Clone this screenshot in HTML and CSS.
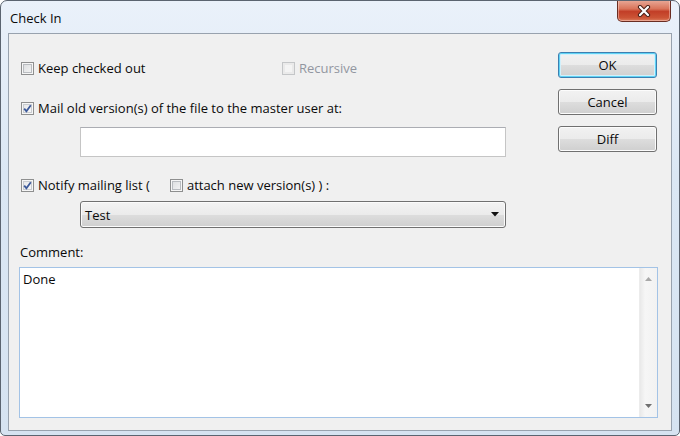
FILE: index.html
```html
<!DOCTYPE html>
<html>
<head>
<meta charset="utf-8">
<link rel="stylesheet" href="styles.css">
</head>
<body>
<div class="window">
  <div class="titlebar">
    <span class="title">Check In</span>
    <div class="close">
      <svg width="14" height="12" viewBox="0 0 14 12">
        <path d="M3 2 L11 10 M11 2 L3 10" stroke="#4a2118" stroke-width="4.2" stroke-linecap="round"/>
        <path d="M3 2 L11 10 M11 2 L3 10" stroke="#ffffff" stroke-width="2.2" stroke-linecap="round"/>
      </svg>
    </div>
  </div>
  <div class="client">
    <div class="top">
      <div class="main">
        <div class="row row-first">
          <label class="check wide"><span class="box"></span><span>Keep checked out</span></label>
          <label class="check disabled"><span class="box"></span><span>Recursive</span></label>
        </div>
        <div class="row row-mail">
          <label class="check"><span class="box checked"><svg width="9" height="9" viewBox="0 0 9 9"><path d="M1.2 4.6 L3.4 7.2 L7.8 1.2" fill="none" stroke="#3d5a9a" stroke-width="1.8"/></svg></span><span>Mail old version(s) of the file to the master user at:</span></label>
        </div>
        <div class="field"></div>
        <div class="row row-notify">
          <label class="check"><span class="box checked"><svg width="9" height="9" viewBox="0 0 9 9"><path d="M1.2 4.6 L3.4 7.2 L7.8 1.2" fill="none" stroke="#3d5a9a" stroke-width="1.8"/></svg></span><span>Notify mailing list (</span></label>
          <label class="check second"><span class="box"></span><span>attach new version(s) ) :</span></label>
        </div>
        <div class="select">
          <span>Test</span>
          <svg width="8" height="5" viewBox="0 0 8 5"><path d="M0 0 H8 L4 4.5 Z" fill="#111"/></svg>
        </div>
      </div>
      <div class="buttons">
        <div class="btn default">OK</div>
        <div class="btn">Cancel</div>
        <div class="btn">Diff</div>
      </div>
    </div>
    <div class="comment-label">Comment:</div>
    <div class="memo">
      <div class="memo-text">Done</div>
      <div class="scrollbar">
        <svg width="7" height="4" viewBox="0 0 7 4"><path d="M0 4 L3.5 0 L7 4 Z" fill="#a8a8a8"/></svg>
        <svg width="7" height="4" viewBox="0 0 7 4"><path d="M0 0 L3.5 4 L7 0 Z" fill="#707070"/></svg>
      </div>
    </div>
  </div>
</div>
</body>
</html>
```

FILE: styles.css
```css
* { box-sizing: border-box; }
html, body { margin: 0; padding: 0; background: #ffffff; }
body {
  font-family: "Open Sans", "Noto Sans", sans-serif;
  font-size: 13px;
  color: #0a0a0a;
}
.window {
  width: 680px;
  height: 436px;
  border: 1px solid #5b6470;
  border-radius: 7px 7px 5px 5px;
  background: linear-gradient(#eaf1fa, #dbe7f4 40%, #d6e3f1);
  display: flex;
  flex-direction: column;
  overflow: hidden;
}
.titlebar {
  height: 32px;
  display: flex;
  align-items: flex-start;
  justify-content: space-between;
  padding-left: 9px;
}
.title {
  margin-top: 7px;
  line-height: 20px;
  color: #0a0a0a;
}
.close {
  width: 54px;
  height: 22px;
  margin-right: 8px;
  margin-top: -1px;
  border: 1px solid #6a2d22;
  border-top: none;
  border-radius: 0 0 5px 5px;
  background: linear-gradient(#e9ab9a 0%, #d9745a 42%, #c23e27 55%, #cc5436 85%, #dc7f60 100%);
  box-shadow: inset 0 0 0 1px rgba(255,220,210,0.45);
  display: flex;
  align-items: center;
  justify-content: center;
}
.client {
  flex: 1;
  margin: 0 7px 4px 7px;
  border: 1px solid #98a2ae;
  background: #f0f0f0;
  padding: 18px 13px 0 10px;
  display: flex;
  flex-direction: column;
}
.top {
  display: flex;
  padding-left: 2px;
}
.main {
  width: 485px;
  display: flex;
  flex-direction: column;
}
.row {
  height: 20px;
  display: flex;
  align-items: center;
}
.row-first { margin-top: 6px; }
.row-mail { margin-top: 20px; }
.row-notify { margin-top: 18px; }
.check {
  display: flex;
  align-items: center;
  gap: 4px;
  white-space: nowrap;
}
.check.wide { width: 261px; }
.check.second { margin-left: 20px; }
.check.disabled { color: #9296a0; }
.box {
  width: 13px;
  height: 13px;
  border: 1px solid #8e8f8f;
  background: #f4f4f4;
  box-shadow: inset 0 0 0 1px #f6f6f6, inset 0 0 0 2px #b9bcc0;
  background-image: linear-gradient(135deg, #d9dbdd, #f7f7f7);
  display: flex;
  align-items: center;
  justify-content: center;
  flex: none;
}
.box.checked {
  background-image: linear-gradient(135deg, #e3e4e6, #fbfbfb);
  box-shadow: inset 0 0 0 1px #f6f6f6, inset 0 0 0 2px #c9ccd0;
}
.disabled .box {
  border-color: #c4c6c8;
  background-image: none;
  background: #f4f4f4;
  box-shadow: inset 0 0 0 2px #eaeaea;
}
.field {
  margin-top: 9px;
  margin-left: 59px;
  width: 426px;
  height: 30px;
  background: #fff;
  border: 1px solid #c5c5c5;
  border-top-color: #abadb3;
}
.select {
  margin-top: 6px;
  margin-left: 59px;
  width: 426px;
  height: 27px;
  border: 1px solid #707070;
  border-radius: 3px;
  background: linear-gradient(#f3f3f3 0%, #ebebeb 50%, #dddddd 51%, #cfcfcf 100%);
  box-shadow: inset 0 0 0 1px #fbfbfb;
  display: flex;
  align-items: center;
  justify-content: space-between;
  padding: 0 6px 0 4px;
}
.buttons {
  width: 99px;
  margin-left: auto;
  margin-right: 1px;
  display: flex;
  flex-direction: column;
  gap: 11px;
}
.btn {
  height: 26px;
  border: 1px solid #707070;
  border-radius: 3px;
  background: linear-gradient(#f2f2f2 0%, #ebebeb 50%, #dddddd 51%, #cfcfcf 100%);
  box-shadow: inset 0 0 0 1px #fcfcfc;
  display: flex;
  align-items: center;
  justify-content: center;
  color: #0a0a0a;
}
.btn.default {
  border-color: #3c7fb1;
  box-shadow: inset 0 0 0 1px #5fd3f5, inset 0 0 0 2px #d2f0fb;
}
.comment-label {
  margin-top: 14px;
  height: 20px;
  line-height: 20px;
  padding-left: 1px;
}
.memo {
  margin-top: 5px;
  height: 151px;
  background: #fff;
  border: 1px solid #a3c3e6;
  display: flex;
}
.memo-text {
  flex: 1;
  padding: 2px 3px;
  line-height: 18px;
}
.scrollbar {
  width: 18px;
  background: linear-gradient(90deg, #e9e9e9, #f6f6f6 30%, #f2f2f2);
  border-left: 1px solid #ececec;
  display: flex;
  flex-direction: column;
  align-items: center;
  justify-content: space-between;
  padding: 9px 0 9px 0;
}
```
